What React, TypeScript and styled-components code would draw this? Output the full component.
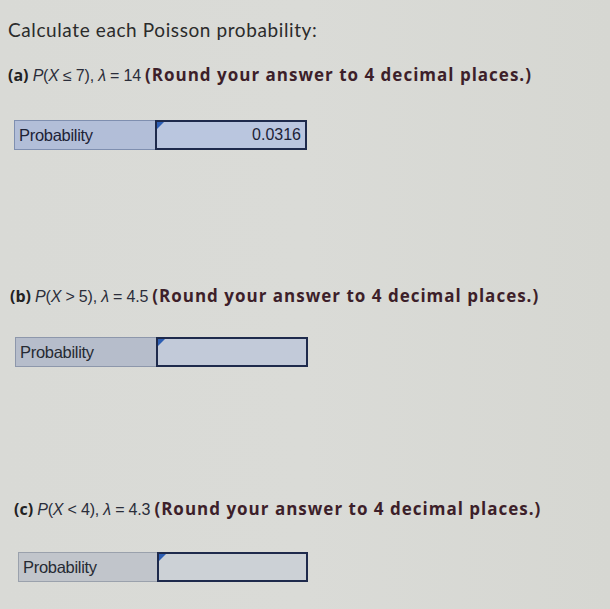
import React from "react";
import styled, { createGlobalStyle } from "styled-components";

const Global = createGlobalStyle`
  html, body { margin: 0; padding: 0; }
  body {
    background: linear-gradient(90deg, #d9dad6 0%, #dadbd7 50%, #d6d7d2 100%);
    width: 610px;
    height: 609px;
    overflow: hidden;
    font-family: Lato, "Open Sans", sans-serif;
  }
`;

const Page = styled.div`
  display: flex;
  flex-direction: column;
  padding-top: 18px;
`;

const Title = styled.div`
  margin-left: 8px;
  font-size: 19px;
  line-height: 24px;
  color: #2b2b2b;
  letter-spacing: 0.6px;
`;

const Question = styled.div<{ $indent: number; $top: number }>`
  margin-left: ${(p) => p.$indent}px;
  margin-top: ${(p) => p.$top}px;
  font-size: 16px;
  line-height: 22px;
  color: #1f1f22;
  white-space: nowrap;
`;

const Letter = styled.span`
  font-family: "Open Sans", Lato, sans-serif;
  font-weight: 700;
  color: #222;
`;

const Expr = styled.span`
  color: #2a2d3a;
  font-family: "Liberation Sans", Arial, sans-serif;
  font-size: 16px;
  letter-spacing: -0.2px;
`;

const Ital = styled.i`
  font-style: italic;
`;

const Note = styled.span`
  font-family: "Open Sans", Lato, sans-serif;
  font-size: 17px;
  font-weight: 700;
  color: #3d1f2a;
  letter-spacing: 1px;
`;

const Field = styled.div<{ $indent: number; $top: number; $tone: number }>`
  display: flex;
  margin-left: ${(p) => p.$indent}px;
  margin-top: ${(p) => p.$top}px;
  height: 30px;
  width: ${(p) => (p.$tone === 2 ? 290 : 293)}px;
`;

const tones = [
  { label: "#b2bed8", input: "#bac6df", border: "#7f8fb0" },
  { label: "#b6bdcb", input: "#c2cad9", border: "#8d97ab" },
  { label: "#c1c5cb", input: "#ccd1d6", border: "#9aa1ac" },
];

const Label = styled.div<{ $tone: number }>`
  box-sizing: border-box;
  width: ${(p) => (p.$tone === 2 ? 139 : 141)}px;
  height: 100%;
  display: flex;
  align-items: center;
  padding-left: 4px;
  background: ${(p) => tones[p.$tone].label};
  border: 1px solid ${(p) => tones[p.$tone].border};
  border-right: none;
  font-family: "Liberation Sans Narrow", "Liberation Sans", Arial, sans-serif;
  font-size: 16.5px;
  color: ${(p) => (p.$tone === 0 ? "#1d2236" : "#262a33")};
  letter-spacing: -0.3px;
`;

const Input = styled.div<{ $tone: number }>`
  position: relative;
  box-sizing: border-box;
  flex: 1;
  height: 100%;
  display: flex;
  align-items: center;
  justify-content: flex-end;
  padding-right: 4px;
  background: ${(p) => tones[p.$tone].input};
  border: 2px solid #1e2a4c;
  font-family: "Liberation Sans Narrow", "Liberation Sans", Arial, sans-serif;
  font-size: 16px;
  color: #1c2236;
`;

const Flag = styled.span`
  position: absolute;
  left: 0;
  top: 0;
  width: 0;
  height: 0;
  border-top: 7px solid #2d5eb3;
  border-right: 7px solid transparent;
`;

type Part = {
  letter: string;
  op: string;
  k: string;
  lam: string;
  qIndent: number;
  qTop: number;
  fIndent: number;
  fTop: number;
  value: string;
};

const parts: Part[] = [
  { letter: "(a)", op: "≤", k: "7", lam: "14", qIndent: 8, qTop: 22, fIndent: 14, fTop: 33, value: "0.0316" },
  { letter: "(b)", op: ">", k: "5", lam: "4.5", qIndent: 10, qTop: 135, fIndent: 15, fTop: 29, value: "" },
  { letter: "(c)", op: "<", k: "4", lam: "4.3", qIndent: 14, qTop: 131, fIndent: 18, fTop: 31, value: "" },
];

export default function App() {
  return (
    <>
      <Global />
      <Page>
        <Title>Calculate each Poisson probability:</Title>
        {parts.map((p, i) => (
          <React.Fragment key={p.letter}>
            <Question $indent={p.qIndent} $top={p.qTop}>
              <Letter>{p.letter}</Letter>{" "}
              <Expr>
                <Ital>P</Ital>(<Ital>X</Ital> {p.op} {p.k}), <Ital>λ</Ital> = {p.lam}
              </Expr>{" "}
              <Note>(Round your answer to 4 decimal places.)</Note>
            </Question>
            <Field $indent={p.fIndent} $top={p.fTop} $tone={i}>
              <Label $tone={i}>Probability</Label>
              <Input $tone={i}>
                <Flag />
                {p.value}
              </Input>
            </Field>
          </React.Fragment>
        ))}
      </Page>
    </>
  );
}
